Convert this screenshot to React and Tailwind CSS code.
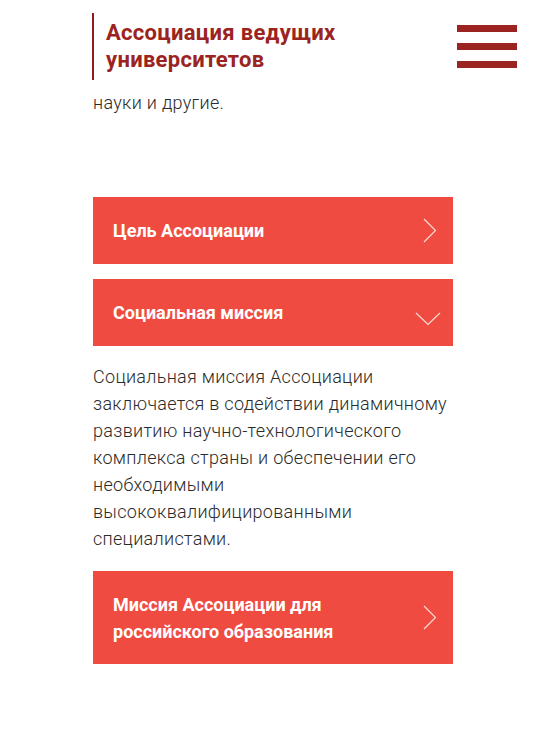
import React from 'react';

const ChevronRight = () => (
  <svg width="14" height="25" viewBox="0 0 14 25" fill="none" className="shrink-0">
    <path d="M1 1 L12.5 12.5 L1 24" stroke="#f6dcd6" strokeWidth="1.2" />
  </svg>
);

const ChevronDown = () => (
  <svg width="26" height="14" viewBox="0 0 26 14" fill="none" className="shrink-0">
    <path d="M1 1 L13 12.5 L25 1" stroke="#f6dcd6" strokeWidth="1.2" />
  </svg>
);

function AccordionItem({ title, open, tall }) {
  return (
    <div
      className={`flex items-center justify-between bg-[#ef4b41] pl-5 pr-4 text-white ${tall ? 'h-[93px]' : 'h-[67px]'}`}
    >
      <span className="text-[18px] font-bold leading-[27px]">{title}</span>
      {open ? (
        <div className="mt-3 -mr-1">
          <ChevronDown />
        </div>
      ) : (
        <ChevronRight />
      )}
    </div>
  );
}

export default function App() {
  return (
    <div className="min-h-[731px] bg-white font-['Roboto',sans-serif]">
      <header className="flex items-start justify-between pl-[92px] pr-[30px] pt-[13px]">
        <div className="border-l-2 border-[#8e1c1c] pl-[12px] h-[67px] flex items-center">
          <h1 className="text-[22px] font-bold leading-[27px] tracking-[0.3px] text-[#9b2320] pb-[2px]">
            Ассоциация ведущих
            <br />
            университетов
          </h1>
        </div>
        <button className="mt-[12px] flex flex-col gap-[11px] w-[60px]">
          <span className="block h-[7px] bg-[#9b2320]" />
          <span className="block h-[7px] bg-[#9b2320]" />
          <span className="block h-[7px] bg-[#9b2320]" />
        </button>
      </header>

      <main className="mx-[93px] w-[360px]">
        <p className="mt-[9px] text-[18px] font-light leading-[27px] tracking-[0.3px] text-[#2b2b2b]">науки и другие.</p>

        <div className="mt-[81px] flex flex-col">
          <AccordionItem title="Цель Ассоциации" />
          <div className="mt-[15px]">
            <AccordionItem title="Социальная миссия" open />
          </div>
          <p className="mt-[17px] text-[18px] font-light leading-[27px] tracking-[0.3px] text-[#2b2b2b]">
            Социальная миссия Ассоциации заключается в содействии динамичному развитию научно-технологического
            комплекса страны и обеспечении его необходимыми высококвалифицированными специалистами.
          </p>
          <div className="mt-[19px]">
            <AccordionItem title={<>Миссия Ассоциации для<br />российского образования</>} tall />
          </div>
        </div>
      </main>
    </div>
  );
}
